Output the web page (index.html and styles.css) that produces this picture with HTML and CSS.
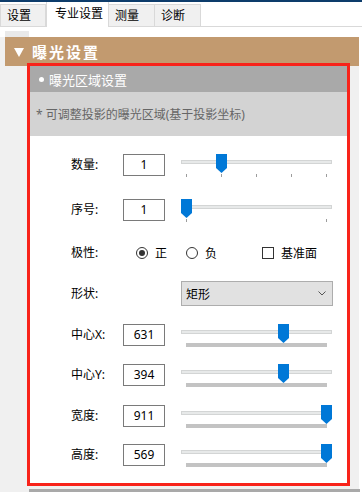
FILE: index.html
```html
<!DOCTYPE html>
<html lang="zh">
<head>
<meta charset="utf-8">
<title>曝光设置</title>
<link rel="stylesheet" href="styles.css">
</head>
<body>
<div class="topbar"></div>
<div class="tabs">
  <div class="tab">设置</div>
  <div class="tab active">专业设置</div>
  <div class="tab">测量</div>
  <div class="tab">诊断</div>
</div>
<div class="strip"><div class="strip-block"></div></div>
<div class="panel">
  <div class="sec-head">
    <svg class="tri" width="10" height="9" viewBox="0 0 10 9"><path d="M0 0 H10 L5 9 Z" fill="#fff"/></svg>
    <span class="sec-title">曝光设置</span>
  </div>
  <div class="box">
    <div class="box-head"><span class="dot"></span><span>曝光区域设置</span></div>
    <div class="box-desc">* 可调整投影的曝光区域(基于投影坐标)</div>
    <div class="form">
      <div class="row">
        <span class="label">数量:</span>
        <span class="num">1</span>
        <div class="slider">
          <div class="track"></div>
          <div class="ticks"><i></i><i></i><i></i><i></i><i></i></div>
          <svg class="thumb" style="left:35px" width="11" height="19" viewBox="0 0 11 19"><path d="M0 0 H11 V14 L5.5 19 L0 14 Z" fill="#0078d7"/></svg>
        </div>
      </div>
      <div class="row">
        <span class="label">序号:</span>
        <span class="num">1</span>
        <div class="slider">
          <div class="track"></div>
          <div class="ticks"><i></i><i></i></div>
          <svg class="thumb" style="left:0px" width="11" height="19" viewBox="0 0 11 19"><path d="M0 0 H11 V14 L5.5 19 L0 14 Z" fill="#0078d7"/></svg>
        </div>
      </div>
      <div class="row">
        <span class="label">极性:</span>
        <div class="choices">
          <span class="radio checked"></span><span class="opt">正</span>
          <span class="radio second"></span><span class="opt">负</span>
          <span class="check"></span><span class="opt">基准面</span>
        </div>
      </div>
      <div class="row">
        <span class="label tall">形状:</span>
        <div class="select">
          <span>矩形</span>
          <svg width="8" height="5" viewBox="0 0 8 5"><polyline points="0.5,0.5 4,4 7.5,0.5" fill="none" stroke="#555" stroke-width="1"/></svg>
        </div>
      </div>
      <div class="row">
        <span class="label">中心X:</span>
        <span class="num">631</span>
        <div class="slider">
          <div class="track"></div>
          <div class="bar"></div>
          <svg class="thumb" style="left:97px" width="11" height="19" viewBox="0 0 11 19"><path d="M0 0 H11 V14 L5.5 19 L0 14 Z" fill="#0078d7"/></svg>
        </div>
      </div>
      <div class="row">
        <span class="label">中心Y:</span>
        <span class="num">394</span>
        <div class="slider">
          <div class="track"></div>
          <div class="bar"></div>
          <svg class="thumb" style="left:97px" width="11" height="19" viewBox="0 0 11 19"><path d="M0 0 H11 V14 L5.5 19 L0 14 Z" fill="#0078d7"/></svg>
        </div>
      </div>
      <div class="row">
        <span class="label">宽度:</span>
        <span class="num">911</span>
        <div class="slider">
          <div class="track"></div>
          <div class="bar"></div>
          <svg class="thumb" style="left:140px" width="11" height="19" viewBox="0 0 11 19"><path d="M0 0 H11 V14 L5.5 19 L0 14 Z" fill="#0078d7"/></svg>
        </div>
      </div>
      <div class="row">
        <span class="label">高度:</span>
        <span class="num">569</span>
        <div class="slider">
          <div class="track"></div>
          <div class="bar"></div>
          <svg class="thumb" style="left:140px" width="11" height="19" viewBox="0 0 11 19"><path d="M0 0 H11 V14 L5.5 19 L0 14 Z" fill="#0078d7"/></svg>
        </div>
      </div>
    </div>
  </div>
  <div class="next"></div>
</div>
</body>
</html>
```

FILE: styles.css
```css
* { box-sizing: border-box; }

body {
  margin: 0;
  width: 362px;
  height: 492px;
  overflow: hidden;
  background: #fff;
  font-family: "Noto Sans", "Noto Sans CJK SC", sans-serif;
  font-size: 12px;
  color: #000;
}

.topbar {
  height: 2px;
  background: #0d3c6b;
}

.tabs {
  display: flex;
  align-items: flex-end;
  height: 25px;
  border-bottom: 1px solid #d9d9d9;
  background: #fff;
}

.tab {
  width: 46px;
  height: 22px;
  padding-left: 6px;
  background: #f0f0f0;
  border: 1px solid #d9d9d9;
  border-bottom: none;
  line-height: 21px;
  white-space: nowrap;
}

.tab + .tab { border-left: none; }

.tab.active {
  width: 63px;
  height: 25px;
  margin-bottom: -1px;
  padding-left: 8px;
  background: #fff;
  border-top: none;
  border-left: 1px solid #d9d9d9;
  line-height: 23px;
}

.strip {
  height: 10px;
  padding: 4px 0 0 5px;
  background: #fff;
}

.strip-block {
  width: 24px;
  height: 6px;
  background: #e9e9e9;
}

.panel {
  width: 359px;
  height: 455px;
  padding-left: 5px;
  background: #f0f0f0;
}

.sec-head {
  display: flex;
  align-items: center;
  gap: 8px;
  height: 29px;
  padding-left: 9px;
  background: #c29a6f;
  color: #fff;
}

.tri { margin-top: 1px; }

.sec-title {
  font-family: "Noto Sans CJK SC", sans-serif;
  font-size: 15px;
  font-weight: bold;
  letter-spacing: 2px;
}

.box {
  width: 323px;
  height: 423px;
  margin: -3px 0 0 22px;
  border: 3px solid #f8231a;
  background: #fff;
  display: flex;
  flex-direction: column;
}

.box-head {
  display: flex;
  align-items: center;
  gap: 5px;
  height: 26px;
  padding-left: 9px;
  background: #a9a9a9;
  color: #fff;
  font-family: "Noto Sans CJK SC", sans-serif;
  font-size: 13px;
}

.dot {
  width: 5px;
  height: 5px;
  border-radius: 50%;
  background: #fff;
}

.box-desc {
  display: flex;
  align-items: center;
  height: 44px;
  padding-left: 6px;
  background: #d3d3d3;
  color: #666;
}

.form {
  display: grid;
  grid-template-rows: 45px 43px 39px 43px 40px 41px 39px 22px;
  padding: 18px 0 0 41px;
}

.row {
  display: flex;
  align-items: flex-start;
}

.label {
  width: 52px;
  line-height: 22px;
  white-space: nowrap;
}

.label.tall { line-height: 25px; }

.num {
  width: 42px;
  height: 22px;
  border: 1px solid #7a7a7a;
  text-align: center;
  line-height: 20px;
}

.slider {
  position: relative;
  width: 151px;
  height: 24px;
  margin-left: 16px;
}

.track {
  height: 4px;
  margin-top: 6px;
  background: #e7e9e9;
  border: 1px solid #d3d5d5;
}

.ticks {
  display: flex;
  justify-content: space-between;
  margin: 10px 5px 0;
}

.ticks i {
  width: 1px;
  height: 3px;
  background: #9c9c9c;
}

.bar {
  height: 4px;
  margin: 9px 5px 0;
  background: #c3c3c3;
}

.thumb {
  position: absolute;
  top: 0;
}

.choices {
  display: flex;
  align-items: center;
  height: 22px;
  margin-left: 13px;
}

.radio {
  width: 12px;
  height: 12px;
  border: 1px solid #333;
  border-radius: 50%;
  background: #fff;
  display: flex;
  align-items: center;
  justify-content: center;
}

.radio.checked::after {
  content: "";
  width: 6px;
  height: 6px;
  border-radius: 50%;
  background: #333;
}

.radio.second { margin-left: 19px; }

.opt { margin-left: 7px; }

.check {
  width: 12px;
  height: 12px;
  margin-left: 45px;
  border: 1px solid #333;
  background: #fff;
}

.select {
  display: flex;
  align-items: center;
  justify-content: space-between;
  width: 152px;
  height: 25px;
  margin-left: 58px;
  padding: 0 6px 0 4px;
  background: #e1e1e1;
  border: 1px solid #adadad;
}

.next {
  width: 331px;
  height: 3px;
  margin: 3px 0 0 24px;
  background: #a9a9a9;
}
```
